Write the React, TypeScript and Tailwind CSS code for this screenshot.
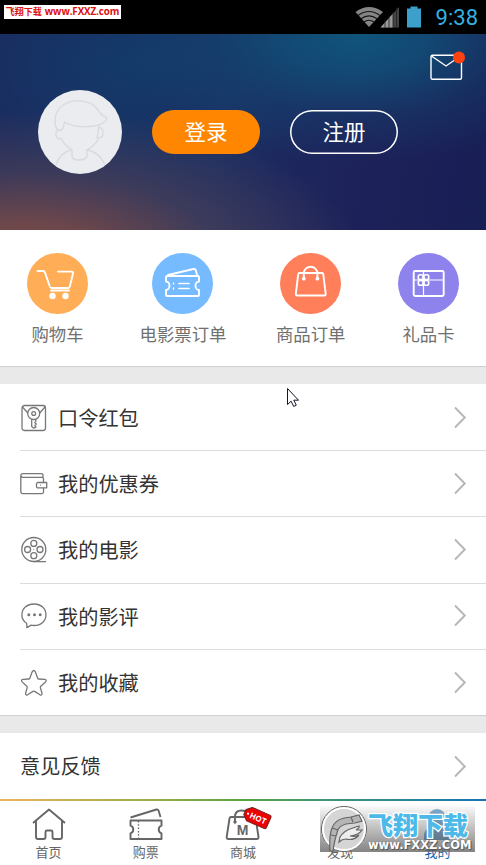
import React from 'react';

interface Shortcut {
  label: string;
  color: string;
  spacing?: string;
  icon: React.ReactNode;
}

interface MenuItem {
  label: string;
  icon: React.ReactNode;
}

const shortcuts: Shortcut[] = [
  {
    label: '购物车',
    color: 'bg-[#ffae57]',
    icon: (
      <>
        <path d="M10.500 18h5.500q1.500 0 2 1.500l4.800 14q.6 1.500 2 1.500h16q1.600 0 2-1.500l3.200-13q.4-1.900-1.500-1.900H31M24 37.500h18" />
        <circle cx="25.500" cy="43" r="3.200" fill="currentColor" stroke="none" />
        <circle cx="38.500" cy="43" r="3.200" fill="currentColor" stroke="none" />
      </>
    ),
  },
  {
    label: '电影票订单',
    color: 'bg-[#76bbff]',
    spacing: 'ml-[2px]',
    icon: (
      <>
        <path d="M15.500 23h30.500q1 0 1 1v4.500a3.500 4.200 0 0 0 0 8.400V42q0 1-1 1H15q-1 0-1-1v-5.100a3.500 4.200 0 0 0 0-8.400V24q0-1 1.500-1z" />
        <path d="M16 22l25.500-6q1.800-.4 2.300 1.300L45 22" />
        <path d="M27 30.500h10M27 35.500h10" strokeWidth="1.700" />
        <path d="M21.500 30v1M21.500 35v1" strokeWidth="1.400" />
      </>
    ),
  },
  {
    label: '商品订单',
    color: 'bg-[#ff7f5b]',
    spacing: 'mr-[3px]',
    icon: (
      <>
        <path d="M19.500 20h22.500q1.200 0 1.300 1.300l2.400 19.500q.1 1.700-1.500 1.700H17.300q-1.600 0-1.500-1.700l2.400-19.500q.2-1.300 1.300-1.300z" />
        <path d="M23.800 25.500V20.500a6.800 6.800 0 0 1 13.600 0v5" />
        <circle cx="23.800" cy="25.700" r="1.900" fill="currentColor" stroke="none" />
        <circle cx="37.400" cy="25.700" r="1.900" fill="currentColor" stroke="none" />
      </>
    ),
  },
  {
    label: '礼品卡',
    color: 'bg-[#8e83ec]',
    icon: (
      <>
        <rect x="15.700" y="18" width="30" height="25" rx="1.500" />
        <path d="M15.700 27h30M25.500 18v25" strokeWidth="1.200" />
        <g strokeWidth="1.600">
          <rect x="20.300" y="21.800" width="4.700" height="4.700" rx="1.800" />
          <rect x="26" y="21.800" width="4.700" height="4.700" rx="1.800" />
          <rect x="20.300" y="27.500" width="4.700" height="4.700" rx="1.800" />
          <rect x="26" y="27.500" width="4.700" height="4.700" rx="1.800" />
        </g>
      </>
    ),
  },
];

const menuItems: MenuItem[] = [
  {
    label: '口令红包',
    icon: (
      <>
        <rect x="2" y="1.500" width="23.500" height="25" rx="2.500" />
        <path d="M2.500 3l5.300 6M25 3l-5.300 6" />
        <circle cx="13.700" cy="9.500" r="6" />
        <circle cx="13.700" cy="9.500" r="1.900" />
        <path d="M11.700 15.200v7.300l2 1.700 2.300-1.200-1.200-1.500 1.500-1.500-1.500-1.500 1-1v-2.500" />
      </>
    ),
  },
  {
    label: '我的优惠券',
    icon: (
      <>
        <path d="M23.500 10.500V7q0-1.500-1.500-1.500H3Q.8 5.500.8 3.800 1 1.800 3 1.800h18.500q1.500 0 1.500 1.500v2M.8 4v16q0 1.800 1.800 1.800H22q1.500 0 1.500-1.500V16" transform="translate(0 1.800)" />
        <path d="M17.500 12.500h9.200v5.300h-9.200q-1-.3-1-1.300v-2.700q0-1 1-1.300z" />
        <path d="M20 15.200h.8" />
      </>
    ),
  },
  {
    label: '我的电影',
    icon: (
      <>
        <circle cx="13.800" cy="13.500" r="12" />
        <circle cx="13.800" cy="7.400" r="3" />
        <circle cx="13.800" cy="19.700" r="3" />
        <circle cx="7.600" cy="13.500" r="3" />
        <circle cx="20" cy="13.500" r="3" />
        <path d="M13.500 13.500h.6M13.800 25.700H26" />
      </>
    ),
  },
  {
    label: '我的影评',
    icon: (
      <>
        <path d="M6.800 25.500q.3-2-.2-4.200C3.500 19.300 1.900 16.500 1.900 13 1.900 6.500 7 2 14 2s12 4.600 12 10.800S21 23.500 14 23.500q-1.800 0-3.300-.3-1.700 1.700-3.900 2.300z" />
        <g fill="currentColor" stroke="none">
          <circle cx="8.800" cy="12.800" r="1.500" />
          <circle cx="14.500" cy="12.800" r="1.500" />
          <circle cx="20.200" cy="12.800" r="1.500" />
        </g>
      </>
    ),
  },
  {
    label: '我的收藏',
    icon: (
      <path d="M12.200 2.800q1.600-2.600 3.100 0l2.400 6.400q.3.800 1.200.8l5.800.4q2.500.5.800 2.500l-4.700 4.300q-.6.600-.4 1.400l1.600 5.600q.2 2.500-2 1.600l-5.400-3.400q-.8-.5-1.600 0l-5.400 3.400q-2.200.9-2-1.600L7.200 18.600q.2-.8-.4-1.400L2.200 12.900q-1.700-2 .8-2.500L8.600 10q.9 0 1.200-.8z" />
    ),
  },
];

const Chevron = () => (
  <svg className="h-6 w-4 text-[#b6b6b6]" viewBox="0 0 16 24" fill="none" stroke="currentColor" strokeWidth="1.900">
    <path d="M3 1.500l9.800 10L3 21.500" />
  </svg>
);

const StatusBar = () => (
  <div className="flex h-[34px] items-start justify-between bg-black">
    <div className="mt-[5px] ml-1 flex h-[14px] w-[117px] items-center justify-center gap-[3px] bg-white text-[10px] font-bold whitespace-nowrap text-[#dc1010]">
      <span className="text-[9px]">飞翔下载</span>
      <span className="font-['Open_Sans'] text-[9.8px] tracking-[-0.1px]">www.FXXZ.com</span>
    </div>
    <div className="flex h-[34px] items-center pr-2">
      <svg className="mr-[11px] h-[22px] w-[70px]" viewBox="0 0 70 22">
        <path d="M.5 6Q14 -4 28 6L14 21z" fill="#858585" />
        <path d="M3 9.500Q14 1.500 25 9.500M6 12.800Q14 7 22 12.800M9 16Q14 12.500 19 16" fill="none" stroke="#151515" strokeWidth="1.200" />
        <path d="M25.500 21.500L44 1v20.500z" fill="#444" />
        <path d="M25.500 21.500L38 7.600v13.900z" fill="#999" />
        <path d="M30 14v8M34 10v12M38 6v16M41.500 2v20" stroke="#222" strokeWidth=".8" />
        <path d="M52 2.500h3.500V.5h7v2H66v19H52z" fill="#3da0ca" />
      </svg>
      <span className="mt-[2px] font-[Roboto] text-[22px] leading-none text-[#35b0e0]">9:38</span>
    </div>
  </div>
);

const ProfileHeader = () => (
  <header className="relative flex h-[196px] items-center bg-[radial-gradient(ellipse_230px_130px_at_74%_0%,#10557b_0%,#10527acc_30%,#124a7455_65%,transparent_100%),radial-gradient(ellipse_340px_150px_at_5%_115%,#7d4a48_0%,#754a49e6_25%,#55465690_58%,transparent_100%),radial-gradient(ellipse_200px_130px_at_28%_15%,#133b6a_0%,transparent_100%),linear-gradient(100deg,#1b285d_0%,#1c2d62_45%,#1d2159_75%,#181f55_100%)] pl-[38px]">
    <svg className="h-[84px] w-[84px] rounded-full bg-[#eaecf0]" viewBox="0 0 84 84" fill="none" stroke="#d8dade" strokeWidth="1.400">
      <path d="M23 40q-6 1-6-9c0-13 11-21 25-20 11 .6 16 5 20 12 2 3 5 3 7 5-2 6-9 8-18 8.500-10 .7-18-.5-24.500-4.500-1 3-.3 7-3.500 8z" />
      <path d="M23 40q-6 0-5 5.500 1 4 5.500 3.500c2 5 6 8 10.500 11v6q0 4 7 4t8-4v-6c5-3 10-7 11.500-12q5 0 4.500-6-1-6-4.500-3.500-.5 5-1.500 9.500M60.500 38v-3M34 59.500c-8 2-14 8-16 15M48 59.500c10 2 16 8 19 15" />
    </svg>
    <button className="ml-[30px] h-[44px] w-[108px] rounded-full bg-[#ff8600] pb-[2px] text-[21.500px] text-white">登录</button>
    <button className="ml-[30px] h-[44px] w-[108px] rounded-full pb-[2px] text-[21.500px] text-white shadow-[inset_0_0_0_1.500px_white]">注册</button>
    <svg className="absolute top-[16px] right-[20px] h-[32px] w-[38px]" viewBox="0 0 38 32" fill="none" stroke="#fff" strokeWidth="1.400">
      <rect x="3" y="5.300" width="30.500" height="24" rx="1.500" />
      <path d="M3.500 6l14.500 10L32.500 6" />
      <circle cx="31" cy="7.500" r="6" fill="#ff4210" stroke="none" />
    </svg>
  </header>
);

const Divider = () => (
  <div className="h-[18px] bg-[#e9e9e9] shadow-[inset_0_2px_1px_-1px_#cfcfcf]" />
);

const Watermark = () => (
  <div className="absolute top-[7px] left-[320px] flex h-[46px] w-[155px] bg-linear-to-b from-[#f5f5f5]/50 to-[#666666]/80">
    <svg className="h-[46px] w-[48px] shrink-0" viewBox="0 0 48 46" fill="none" stroke="#666" strokeWidth="1.200">
      <circle cx="24" cy="23" r="21.500" fill="#d5d5d5" stroke="#fff" strokeWidth="3" />
      <circle cx="24" cy="23" r="22.600" strokeWidth="1" />
      <path d="M10 45q-1-16 2-23 3-8 12-10l7-1 8-2 3 6-7 2-9 1q-8 2-9 9-2 5-4 18z" fill="#b5b5b5" />
      <path d="M31 11l2 5M12 22l6 2M11 29l5 1" />
      <path d="M20 31q4-6 10-8l9-3q1 2-3 4l6 0q-3 5-12 6 6 1 9-1-5 6-13 4-4 0-7 3z" fill="#eee" />
    </svg>
    <div className="flex flex-col items-start">
      <span className="mt-[3px] text-[25px] leading-[30px] font-black whitespace-nowrap text-[#4db9e9] [-webkit-text-stroke:2.500px_white] [paint-order:stroke_fill]">飞翔下载</span>
      <span className="font-['DejaVu_Sans'] text-[11.500px] leading-[12px] font-bold whitespace-nowrap text-white [text-shadow:1px_1px_1px_#555,0_0_1px_#555]">
        www.FXXZ.COM
      </span>
    </div>
  </div>
);

const tabs: MenuItem[] = [
  {
    label: '首页',
    icon: <path d="M2 16L18 2.500 34 16M5 14v16q0 2 2 2h5.500q2 0 2-2v-5q0-1.500 1.500-1.500h4q1.500 0 1.500 1.500v5q0 2 2 2H29q2 0 2-2V14" />,
  },
  {
    label: '购票',
    icon: (
      <>
        <path d="M2.500 13.500h31v5.200a4 4 0 0 0 0 7.600V32h-31v-5.700a4 4 0 0 0 0-7.600z" />
        <path d="M2.500 10.500L28.500 2.500q1.500-.3 2 1l2 6.500" />
        <path d="M10.500 14v18" strokeWidth="1.300" strokeDasharray="1.500 1.800" />
      </>
    ),
  },
  {
    label: '商城',
    icon: (
      <>
        <path d="M6 10h23q1.500 0 1.700 1.500l2.800 18.500q.1 2-1.800 2H3.500q-2 0-1.800-2L4.500 11.500Q4.800 10 6 10z" />
        <path d="M10 15V10q0-6.500 6.500-6.500 5 0 6.500 4" />
        <circle cx="10" cy="15" r="1.700" fill="currentColor" stroke="none" />
        <text x="17.500" y="28" textAnchor="middle" fontSize="14" fontWeight="700" fontFamily="Liberation Sans" fill="currentColor" stroke="none">M</text>
        <g transform="translate(-1.500 0) rotate(24 33 11)">
          <path d="M25 3h19q2 0 2 2v10.500q0 2-2 2H25l-5-4.500V7.500z" fill="#ed0000" stroke="#782020" strokeWidth="1" />
          <circle cx="23.500" cy="10.500" r="1.100" fill="#fff" stroke="none" />
          <text x="34.500" y="13.500" textAnchor="middle" fontSize="8" fontWeight="700" fontFamily="Open Sans" fill="#fff" stroke="none">HOT</text>
        </g>
      </>
    ),
  },
  {
    label: '发现',
    icon: <circle cx="18" cy="17" r="15" />,
  },
  {
    label: '我的',
    icon: (
      <g fill="currentColor" stroke="none">
        <circle cx="18" cy="11" r="9" />
        <path d="M5 33v-5q0-6 8-8h10q8 2 8 8v5z" />
      </g>
    ),
  },
];

const TabBar = () => (
  <nav className="relative -mt-px h-[66px] bg-white">
    <div className="-mb-[0.5px] h-[1.5px] bg-linear-to-r from-[#efb35d] via-[#57a43e] via-50% to-[#1673b5]" />
    <div className="grid grid-cols-5">
      {tabs.map((tab) => (
        <div
          key={tab.label}
          className={tab.label === '我的' ? 'flex flex-col items-center text-[#1265a8]' : 'flex flex-col items-center text-[#666]'}
        >
          <svg className="mt-[7px] h-[36px] w-[36px] overflow-visible" viewBox="0 0 36 36" fill="none" stroke="currentColor" strokeWidth="1.900" strokeLinejoin="round">
            {tab.icon}
          </svg>
          <span className="text-[13px] leading-[18px]">{tab.label}</span>
        </div>
      ))}
    </div>
    <Watermark />
  </nav>
);

const App: React.FC = () => {
  return (
    <div className="relative h-[865px] w-[486px] overflow-hidden bg-white font-['Noto_Sans_CJK_SC',sans-serif]">
      <StatusBar />
      <ProfileHeader />

      <section className="flex h-[136px] items-start justify-between pt-[23px] pr-[27px] pl-[27px]">
        {shortcuts.map((item) => (
          <div key={item.label} className={`flex flex-col items-center ${item.spacing ?? ''}`}>
            <div className={`h-[61px] w-[61px] rounded-full text-white ${item.color}`}>
              <svg viewBox="0 0 61 61" fill="none" stroke="currentColor" strokeWidth="1.900" strokeLinecap="round" strokeLinejoin="round">
                {item.icon}
              </svg>
            </div>
            <span className="mt-[7px] text-[17.4px] leading-[26px] text-[#707070]">{item.label}</span>
          </div>
        ))}
      </section>

      <Divider />

      <section className="h-[331px] pt-px">
        {menuItems.map((item, i) => (
          <div
            key={item.label}
            className={`ml-5 flex h-[66.2px] items-center pr-[18px] ${i < menuItems.length - 1 ? 'border-b border-[#dcdcdc]' : ''}`}
          >
            <svg className="h-[28px] w-[28px] text-[#777]" viewBox="0 0 28 28" fill="none" stroke="currentColor" strokeWidth="1.300" strokeLinejoin="round">
              {item.icon}
            </svg>
            <span className="ml-[10px] flex-1 pt-px text-[20.2px] leading-none text-[#333]">{item.label}</span>
            <Chevron />
          </div>
        ))}
      </section>

      <Divider />

      <section className="flex h-[67px] items-center pr-[18px] pl-[20px]">
        <span className="flex-1 text-[20.2px] leading-none text-[#333]">意见反馈</span>
        <Chevron />
      </section>

      <TabBar />

      {/* mouse pointer */}
      <svg className="absolute top-[387px] left-[286px] h-[22px] w-[15px]" viewBox="0 0 15 22">
        <path d="M1.500 1.500v16l3.600-3.300 2.600 5.300 2.600-1.300-2.500-5h4.700z" fill="#fff" stroke="#15152a" strokeWidth="1" />
      </svg>
    </div>
  );
};

export default App;
